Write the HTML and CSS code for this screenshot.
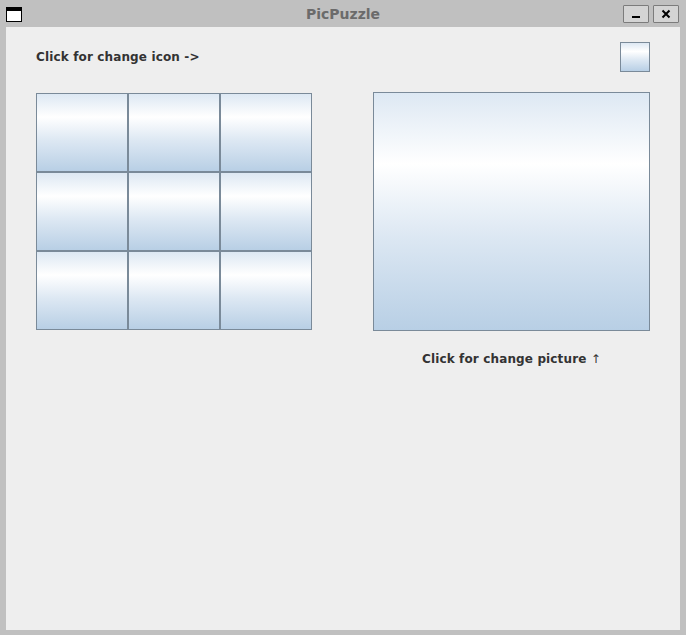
FILE: index.html
```html
<!DOCTYPE html>
<html>
<head>
<meta charset="utf-8">
<title>PicPuzzle</title>
<link rel="stylesheet" href="styles.css">
</head>
<body>
<div class="window">
  <div class="titlebar">
    <div class="tb-left"><span class="win-icon"></span></div>
    <div class="title">PicPuzzle</div>
    <div class="tb-right">
      <span class="tb-btn"><svg width="10" height="10" viewBox="0 0 10 10"><rect x="1" y="7" width="8" height="2" fill="#000"/></svg></span>
      <span class="tb-btn"><svg width="10" height="10" viewBox="0 0 10 10"><path d="M1.5 1.5 L8.5 8.5 M8.5 1.5 L1.5 8.5" stroke="#000" stroke-width="2" fill="none"/></svg></span>
    </div>
  </div>
  <div class="content">
    <div class="top-row">
      <span class="label">Click for change icon -&gt;</span>
      <span class="icon-btn"></span>
    </div>
    <div class="main-row">
      <div class="grid">
        <span class="cell"></span><span class="cell"></span><span class="cell"></span>
        <span class="cell"></span><span class="cell"></span><span class="cell"></span>
        <span class="cell"></span><span class="cell"></span><span class="cell"></span>
      </div>
      <div class="pic-col">
        <div class="picture"></div>
        <div class="label caption">Click for change picture <span class="arrow">↑</span></div>
      </div>
    </div>
  </div>
</div>
</body>
</html>
```
FILE: styles.css
```css
html, body {
  margin: 0;
  padding: 0;
}
body {
  width: 686px;
  height: 635px;
  overflow: hidden;
  font-family: "DejaVu Sans", sans-serif;
}
.window {
  width: 686px;
  height: 635px;
  background: #c0c0c0;
  display: flex;
  flex-direction: column;
  box-sizing: border-box;
}
.titlebar {
  height: 27px;
  display: grid;
  grid-template-columns: 1fr auto 1fr;
  align-items: center;
}
.tb-left {
  padding-left: 6px;
  display: flex;
  align-items: center;
}
.win-icon {
  display: block;
  width: 16px;
  height: 15px;
  box-sizing: border-box;
  border: 1px solid #000;
  border-top-width: 4px;
  background: #fff;
  margin-top: 1px;
}
.title {
  font-weight: bold;
  font-size: 14px;
  color: #6b6b6b;
}
.tb-right {
  display: flex;
  justify-content: flex-end;
  gap: 4px;
  padding-right: 7px;
}
.tb-btn {
  width: 26px;
  height: 18px;
  box-sizing: border-box;
  border: 1px solid #7c7c7c;
  border-radius: 1px;
  background: #d4d4d4;
  display: flex;
  align-items: center;
  justify-content: center;
  margin-top: 1px;
}
.content {
  flex: 1;
  margin: 0 6px 5px 6px;
  background: #eeeeee;
  padding: 15px 30px 0 30px;
}
.top-row {
  display: flex;
  justify-content: space-between;
  align-items: center;
}
.label {
  font-size: 12px;
  font-weight: bold;
  color: #333333;
  letter-spacing: 0.14px;
}
.arrow {
  font-weight: normal;
  color: #333333;
}
.icon-btn,
.cell,
.picture {
  box-sizing: border-box;
  border: 1px solid #7a8a99;
  background: linear-gradient(to bottom, #dde8f3 0%, #ffffff 30%, #dde8f3 60%, #b8cfe5 100%);
}
.icon-btn {
  width: 30px;
  height: 30px;
}
.main-row {
  margin-top: 20px;
  display: flex;
  align-items: flex-start;
  gap: 61px;
}
.grid {
  margin-top: 1px;
  display: grid;
  grid-template-columns: repeat(3, 92px);
  grid-template-rows: repeat(3, 79px);
}
.pic-col {
  display: flex;
  flex-direction: column;
  align-items: center;
}
.picture {
  width: 277px;
  height: 239px;
}
.caption {
  margin-top: 21px;
}
```
